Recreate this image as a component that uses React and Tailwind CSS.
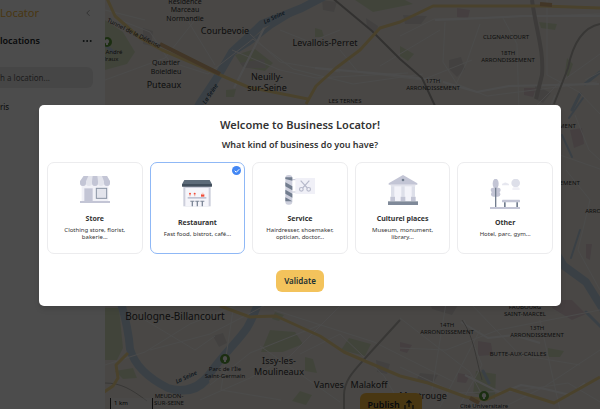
import React, { useState } from 'react';
import { ChevronLeft, MoreHorizontal, Check } from 'lucide-react';

const StoreIcon = () => (
  <svg viewBox="0 0 90 90" className="h-[30px] w-[30px]" aria-hidden="true">
    <rect x="5" y="22" width="80" height="58" fill="#f1f1f7" />
    <path d="M11 3h70l9 16v5a9 9 0 0 1-18 0 9 9 0 0 1-18 0 9 9 0 0 1-18 0 9 9 0 0 1-18 0 9 9 0 0 1-18 0v-5z" fill="#e3e4ec" />
    <path d="M11 3h14l-7 16v5a9 9 0 0 1-18 0v-5zM38 3h14l2 16v5a9 9 0 0 1-18 0v-5zM66 3h15l9 16v5a9 9 0 0 1-18 0v-5z" fill="#c3c5d5" />
    <rect x="13" y="40" width="25" height="38" fill="#c3c5d5" />
    <rect x="49" y="40" width="31" height="30" fill="#e3e4ec" stroke="#8992a3" strokeWidth="3" />
    <rect x="0" y="78" width="90" height="6" fill="#c3c5d5" />
  </svg>
);

const RestaurantIcon = () => (
  <svg viewBox="0 0 90 90" className="h-[30px] w-[30px]" aria-hidden="true">
    <rect x="4" y="22" width="82" height="60" fill="#cdcfdc" />
    <rect x="10" y="27" width="70" height="55" fill="#f5f5fa" />
    <path d="M7 3h76l7 13H0z" fill="#5d6b79" />
    <rect x="0" y="15" width="90" height="8" rx="1" fill="#414e5c" />
    <rect x="17" y="54" width="56" height="5" fill="#bfc2d2" />
    <circle cx="24" cy="44" r="3" fill="#f04b37" />
    <circle cx="38" cy="44" r="3" fill="#f04b37" />
    <path d="M22 47h4v5h-4zM36 47h4v5h-4z" fill="#f3b9b2" />
    <path d="M57 46h10v7H57z" fill="#f04b37" />
    <path d="M59 41h6v5h-6z" fill="#f9cfc9" />
    <path d="M25 65h12v3h-4v14h-4V68h-4zM40 65h12v3h-4v14h-4V68h-4zM55 65h12v3h-4v14h-4V68h-4z" fill="#7f8999" />
  </svg>
);

const ServiceIcon = () => (
  <svg viewBox="0 0 90 90" className="h-[30px] w-[30px]" aria-hidden="true">
    <path d="M20 14h14M20 51h14" stroke="#c3c5d5" strokeWidth="3" />
    <rect x="31" y="9" width="59" height="48" fill="#f0f0f7" />
    <rect x="1" y="0" width="21" height="89" rx="9" fill="#cdcfdc" />
    <path d="M1 7h21v10L1 12zM1 22l21 12v12L1 34zM1 44l21 12v12L1 56zM1 67l21 12H1z" fill="#727d8e" />
    <g fill="none" stroke="#b7bacb" strokeWidth="3.5">
      <circle cx="49" cy="43" r="5.5" />
      <circle cx="71" cy="43" r="5.5" />
      <path d="M53 39l20-22M67 39L47 17" />
    </g>
  </svg>
);

const CultureIcon = () => (
  <svg viewBox="0 0 90 90" className="h-[30px] w-[30px]" aria-hidden="true">
    <rect x="10" y="28" width="70" height="51" fill="#f3f3f9" />
    <path d="M45 0l43 25v4H2v-4z" fill="#c3c5d5" />
    <circle cx="45" cy="15" r="4" fill="#727d8e" />
    <rect x="8" y="29" width="74" height="5" fill="#e1e2eb" />
    <path d="M9 34h10v31H9zM40 34h10v31H40zM71 34h10v31H71z" fill="#dddfe9" />
    <path d="M7 65h14v14H7zM38 65h14v14H38zM69 65h14v14H69z" fill="#c3c5d5" />
    <rect x="0" y="79" width="90" height="11" fill="#7f8999" />
  </svg>
);

const OtherIcon = () => (
  <svg viewBox="0 0 90 90" className="h-[30px] w-[30px]" aria-hidden="true">
    <ellipse cx="17" cy="14" rx="9" ry="15" fill="#c3c5d5" />
    <rect x="2" y="26" width="30" height="14" rx="7" fill="#c3c5d5" />
    <rect x="3" y="38" width="28" height="15" rx="7" fill="#c3c5d5" />
    <path d="M15 26h4v58h-4z" fill="#727d8e" />
    <circle cx="77" cy="12" r="13" fill="#dddfe9" />
    <path d="M36 19a5 5 0 0 1 5-6 6 6 0 0 1 10 0 5 5 0 0 1 6 6z" fill="#e6e7ef" />
    <path d="M68 33a5 5 0 0 1 3-8h12a5 5 0 0 1 5 8z" fill="#f0f0f6" />
    <rect x="36" y="62" width="54" height="8" rx="2" fill="#c3c5d5" />
    <path d="M42 70h5v15h-5zM79 70h5v15h-5z" fill="#727d8e" />
    <rect x="0" y="84" width="90" height="6" fill="#c3c5d5" />
  </svg>
);

const PublishIcon = () => (
  <svg viewBox="0 0 10 12" className="h-3 w-[10px]" fill="none" stroke="currentColor" strokeWidth="1.2" aria-hidden="true">
    <path d="M1 6v4.500h8V6M5 8V2M2.500 4L5 1.500 7.500 4" />
  </svg>
);

const businessTypes = [
  { id: 'store', title: 'Store', description: 'Clothing store, florist, bakerie...', icon: StoreIcon },
  { id: 'restaurant', title: 'Restaurant', description: 'Fast food, bistrot, café...', icon: RestaurantIcon },
  { id: 'service', title: 'Service', description: 'Hairdresser, shoemaker, optician, doctor...', icon: ServiceIcon },
  { id: 'culture', title: 'Culturel places', description: 'Museum, monument, library...', icon: CultureIcon },
  { id: 'other', title: 'Other', description: 'Hotel, parc, gym...', icon: OtherIcon },
];

const towns = [
  { x: 225, y: 34, lines: ['Courbevoie'] },
  { x: 325, y: 46, lines: ['Levallois-Perret'] },
  { x: 267, y: 80, lines: ['Neuilly-', 'sur-Seine'] },
  { x: 164, y: 88, lines: ['Puteaux'] },
  { x: 279, y: 364, lines: ['Issy-les-', 'Moulineaux'] },
  { x: 329, y: 388, lines: ['Vanves'] },
  { x: 369, y: 388, lines: ['Malakoff'] },
  { x: 423, y: 399, lines: ['Montrouge'] },
];

const districts = [
  { x: 506, y: 39, name: 'CLIGNANCOURT' },
  { x: 508, y: 55, name: '18TH' },
  { x: 508, y: 62, name: 'ARRONDISSEMENT' },
  { x: 433, y: 83, name: '17TH' },
  { x: 433, y: 90, name: 'ARRONDISSEMENT' },
  { x: 345, y: 103, name: 'LES TERNES' },
  { x: 549, y: 128, name: 'ARRONDISSEMENT' },
  { x: 553, y: 185, name: 'ARRONDISSEMENT' },
  { x: 612, y: 213, name: 'ARRONDISSEMENT' },
  { x: 525, y: 309, name: 'FAUBOURG' },
  { x: 525, y: 316, name: 'SAINT-MARCEL' },
  { x: 447, y: 327, name: '14TH' },
  { x: 447, y: 334, name: 'ARRONDISSEMENT' },
  { x: 537, y: 330, name: '13TH' },
  { x: 537, y: 337, name: 'ARRONDISSEMENT' },
  { x: 518, y: 356, name: 'BUTTE-AUX-CAILLES' },
  { x: 169, y: 398, name: 'MEUDON-' },
  { x: 169, y: 405, name: 'SUR-SEINE' },
];

const places = [
  { x: 185, y: 4, name: 'Résidence' },
  { x: 185, y: 12, name: 'Marceau' },
  { x: 185, y: 21, name: 'Normandie' },
  { x: 166, y: 65, name: 'Quartier' },
  { x: 166, y: 74, name: 'Boieldieu' },
];

const parks = [
  { x: 107, y: 42, lines: ['Parc André', 'Malraux'] },
  { x: 225, y: 359, lines: ["Parc de l'Île", 'Saint-Germain'] },
  { x: 484, y: 396, lines: ['Cité Universitaire'] },
];

const CityMap = () => (
  <svg viewBox="105 0 495 409" preserveAspectRatio="xMidYMid slice" className="h-full w-full bg-[#f3efe8]" aria-label="Map of Paris">
    {/* parks and built-up areas */}
    <g fill="#dbe4c4">
      <path d="M105 20l18 12 12 20-8 12-22 6zM235 55l20-6 18 14-8 8-22-4zM315 28l7 2 2 7-9 0zM226 90l10-1-2 8-8 0zM105 308h14l4 40-6 12h-12zM270 330l25 2 8 12-20 8-22 0zM305 357l8 2 4 14-12-2zM349 338l22 6-6 12-24-6zM300 391l12 4-6 10-14-4zM476 371l20 3-1 25-22-6zM400 46l14 8-6 7-8-5zM548 348l16 3-4 6-12 0zM115 371l18 -3 4 10-14 1zM275 312l9 3-5 6-7-2zM567 58l6 6-5 14-3-6zM539 22l18 2-2 6-14-2zM355 0h50l8 4-40 8z" />
    </g>
    <g fill="#dfdbd8">
      <path d="M322 0l15 2-3 10-11-2zM366 18l12 8-1 7-10-5zM449 60l12-3 4 12-8 8-8-8zM403 15l24 1-6 8-16 0zM213 336l10-3 4 10-8 4zM376 360l14 4-3 10-10-2zM240 63l24-4 2 9-22 0zM143 28l10 3-2 15-8-2zM420 373l18 2-6 10-16-4zM430 303l28 2-6 10-20-6zM535 85l16 8-8 10-8-4z" />
    </g>
    <g fill="#e6d3d8">
      <path d="M457 8l13 2-2 8-11-1zM555 300h17l14 14-14 6-20-12zM478 341l13 2 2 12-15 1zM400 342l12 3-5 8-7-2zM458 373l12 2-4 8-9-1zM524 88l12 0-3 9-9-2zM570 130l12-2 2 16-10 4zM586 244l6 0-2 16-4-2z" />
    </g>
    {/* water */}
    <g fill="none" stroke="#c3d6e8" strokeLinecap="round" strokeLinejoin="round">
      <path d="M325-4L302 8 262 24 232 52 218 76 200 103 188 125" strokeWidth="8" />
      <path d="M298 10L272 26 250 43 232 54" strokeWidth="4" />
      <path d="M121 303c5 17 8 33 9 46 5 18 22 31 38 39 18 6 33-2 43-16 12-17 27-31 36-44 6-10 8-17 11-24" strokeWidth="8" />
      <path d="M130 350c10 20 25 36 44 42 14 3 26-1 34-10" strokeWidth="3" />
      <path d="M548 240l16 26 22 16 20 32" strokeWidth="8" />
      <path d="M600 72l-15 12M580 94l-8 16M586 312l20 20M483 371l6 12M105 45l10 8" strokeWidth="3" />
      <path d="M583 98l-14 20M562 135l10 22M580 230l-9 28" strokeWidth="2" />
    </g>
    {/* streets */}
    <g fill="none" stroke="#fdfcfa" strokeWidth="1">
      <path d="M105 80l60-22 30-38M120 20l30 12 20 30 38 12M175 0l40 65M208 74l45-35 40 30 60 15 70-10M250 34l30 28 60 10M232 50l48 20 36 8 92-5M340 50l18 22 64 8 50-20M380 66l60-36M400 36l34-17 70-2 96-3M445 22l-2 40 14 22 30 12 110-14M503 18l14 26 2 70M480 24l-14 40-10 20M547 0v75l32 17 21 22M600 54l-42 30-30 30M585 80l15-8M555 95l-8 20M340 30l-30 12-30-12M105 10l40 10M560 155l40 14M575 115l14 35 11 10M566 170l24 30-12 50 22 40" />
      <path d="M105 365l40-13 45-28 60-24M145 320l50 30 20-14M150 350l60-16 54-28M200 400l50-22 40-22 50-50M233 310l-12 80 60 10M260 346l80 56M210 385l40-32 70-28M274 310l100 32 80 40M300 354l40-20 44 42 20 34M400 318l70 54 20 38M400 348l46 2 52-20 102-20M464 320l18 45-24 44M470 303l50 52 60 10M540 320l20 90M600 350l-56 37-40 20M400 367l56 26 60-2 52-8 34 20M432 390l14-87M480 330l-40 77" />
    </g>
    <g fill="none" stroke="#ffffff" strokeWidth="2">
      <path d="M435 20l28-1 60-3h77M443 82l34 10 32-6 90-2M315 68l80 7 46 6M264 28l-30 60M461 322l27 16 26-3 26 8M465 375l36 18 20-8 24 4 25 6 15-12" />
    </g>
    {/* railways */}
    <g fill="none" stroke="#bbb7b2" strokeWidth="2">
      <path d="M330-4l42 35 28 28 22 19 14 30" stroke="#a9a5a0" />
      <path d="M400 320l-32 35c-12 14-24 24-24 40v14M600 24c-20 4-28 24-32 44l-14 36" />
      <path d="M532 0c4 30 12 50 10 75l-6 24" stroke="#cbc7c1" strokeWidth="4" />
      <path d="M105 383c16 0 26 6 42 18M462 320c12 16 14 40 20 60" strokeWidth="1" />
    </g>
    {/* main roads */}
    <g fill="none" stroke="#f9dc93" strokeWidth="3" strokeLinejoin="round">
      <path d="M105-6l10 22 25 22 22 12 40 17 46 20 60 12M306 104l10-18 20-18 24-18 20-22 20-6 33-16 110 0 57 2M220 306l30 11 26-1 44 20 24 16 56 24 28 7 38 14 20 3 24-11 44 14 46-26M128 353l-12 12 2 13-5 8-9 6" />
    </g>
    <path d="M160 44l60 30M540 4l12 1M470 398l9 5" stroke="#dcb482" strokeWidth="4" />

    <g fontFamily='"Noto Sans", sans-serif' textAnchor="middle" fill="#333333">
      {towns.map((town) => (
        <text key={town.lines[0]} y={town.y} fontSize="9">
          {town.lines.map((line, i) => (
            <tspan key={line} x={town.x} dy={i * 11}>{line}</tspan>
          ))}
        </text>
      ))}
      <text x="175" y="320" fontSize="10">Boulogne-Billancourt</text>
      {districts.map((d) => (
        <text key={`${d.name}-${d.x}`} x={d.x} y={d.y} fontSize="6">{d.name}</text>
      ))}
      {places.map((p) => (
        <text key={p.name} x={p.x} y={p.y} fontSize="7">{p.name}</text>
      ))}
      <text fontSize="6" transform="translate(133 35) rotate(27)">Tunnel de la Défense</text>
      <g fontSize="6" fontStyle="italic" fontWeight="600" fill="#35536b">
        <text transform="translate(275 19) rotate(-26)">La Seine</text>
        <text transform="translate(212 95) rotate(-56)">La Seine</text>
        <text transform="translate(187 379) rotate(-25)">La Seine</text>
      </g>
      {parks.map((p) => (
        <g key={p.lines[0]}>
          <circle cx={p.x} cy={p.y} r="5" fill="#5d9b3b" />
          <path d={`M${p.x} ${p.y - 3}a2.500 2.500 0 0 1 1 4.600v1.400h-2v-1.400a2.500 2.500 0 0 1 1-4.600z`} fill="#ffffff" />
          {p.lines.map((line, i) => (
            <text key={line} x={p.x} y={p.y + 12 + i * 7} fontSize="6">{line}</text>
          ))}
        </g>
      ))}
    </g>
  </svg>
);

const Sidebar = () => (
  <aside className="w-[105px] shrink-0 overflow-hidden bg-white text-[#1b2629]">
    <div className="flex items-center justify-between pt-1 pr-3">
      <span className="text-[11px] leading-[18px] text-[#f5b83d]">Locator</span>
      <button type="button" aria-label="Collapse"><ChevronLeft size={10} color="#999999" /></button>
    </div>
    <div className="mt-3 flex items-center justify-between pr-3">
      <h2 className="text-[9px] leading-[14px] font-semibold">locations</h2>
      <button type="button" aria-label="More"><MoreHorizontal size={12} strokeWidth={2} /></button>
    </div>
    <div className="mt-[15px] pr-3">
      <input
        type="text"
        aria-label="Location"
        placeholder="h a location..."
        className="h-[21px] w-full rounded-r-md bg-[#ebebeb] text-[8px] placeholder:text-[#666666]"
      />
    </div>
    <p className="mt-3 text-[8px] leading-[14px]">ris</p>
  </aside>
);

const BusinessCard = ({ type, selected, onSelect }) => {
  const Icon = type.icon;

  return (
    <label
      className={`relative flex h-[92px] min-w-0 flex-1 cursor-pointer flex-col items-center justify-center rounded-[7px] border bg-white px-1 text-center ${
        selected ? 'border-[#8fb8f6]' : 'border-[#ececee]'
      }`}
    >
      <input
        type="radio"
        name="businessType"
        value={type.id}
        checked={selected}
        onChange={() => onSelect(type.id)}
        className="sr-only"
      />
      {selected && (
        <span className="absolute top-[3px] right-[3px] flex h-[9px] w-[9px] items-center justify-center rounded-full bg-[#4387f4]">
          <Check size={6} strokeWidth={4} color="#ffffff" />
        </span>
      )}
      <Icon />
      <span className="mt-[9px] text-[7px] leading-[10px] font-bold text-[#333333]">{type.title}</span>
      <span className="mt-[3px] px-2 text-[6px] leading-[7px] text-[#333333]">{type.description}</span>
    </label>
  );
};

const App = () => {
  const [selected, setSelected] = useState('restaurant');
  const [open, setOpen] = useState(true);

  const submitHandler = (event) => {
    event.preventDefault();
    setOpen(false);
  };

  return (
    <div className="relative flex h-screen overflow-hidden font-['Noto_Sans',sans-serif]">
      <Sidebar />
      <main className="relative min-w-0 flex-1">
        <CityMap />
        {/* map scale */}
        <div className="absolute bottom-0 left-[5px] flex h-[11px] w-[43px] items-center border-x border-[#333333] bg-white/40 pl-[3px] text-[6px]">
          1 km
        </div>
        <button
          type="button"
          className="absolute -bottom-2 left-1/2 ml-[7px] flex h-6 items-center gap-1 rounded-md bg-[#f5b83d] px-2 text-[9px] font-semibold text-[#1b2629]"
        >
          Publish
          <PublishIcon />
        </button>
      </main>

      {open && (
        <div className="absolute inset-0 flex items-center justify-center bg-black/70 px-[39px] pt-0.5">
          <form
            role="dialog"
            aria-labelledby="welcome-title"
            onSubmit={submitHandler}
            className="flex w-full max-w-3xl flex-col items-center rounded-[5px] bg-white px-2 pt-3 pb-[14px] shadow-md"
          >
            <h1 id="welcome-title" className="text-[11px] leading-4 font-semibold text-[#333333]">
              Welcome to Business Locator!
            </h1>
            <p className="mt-1.5 text-[9px] leading-3 font-semibold text-[#333333]">What kind of business do you have?</p>
            <div role="radiogroup" aria-label="Business type" className="mt-[11px] flex w-full gap-[7px]">
              {businessTypes.map((type) => (
                <BusinessCard key={type.id} type={type} selected={selected === type.id} onSelect={setSelected} />
              ))}
            </div>
            <button
              type="submit"
              className="mt-4 h-[22px] rounded-md bg-[#f3c35c] px-2 text-[8px] font-semibold text-[#1b3033]"
            >
              Validate
            </button>
          </form>
        </div>
      )}
    </div>
  );
};

export default App;
